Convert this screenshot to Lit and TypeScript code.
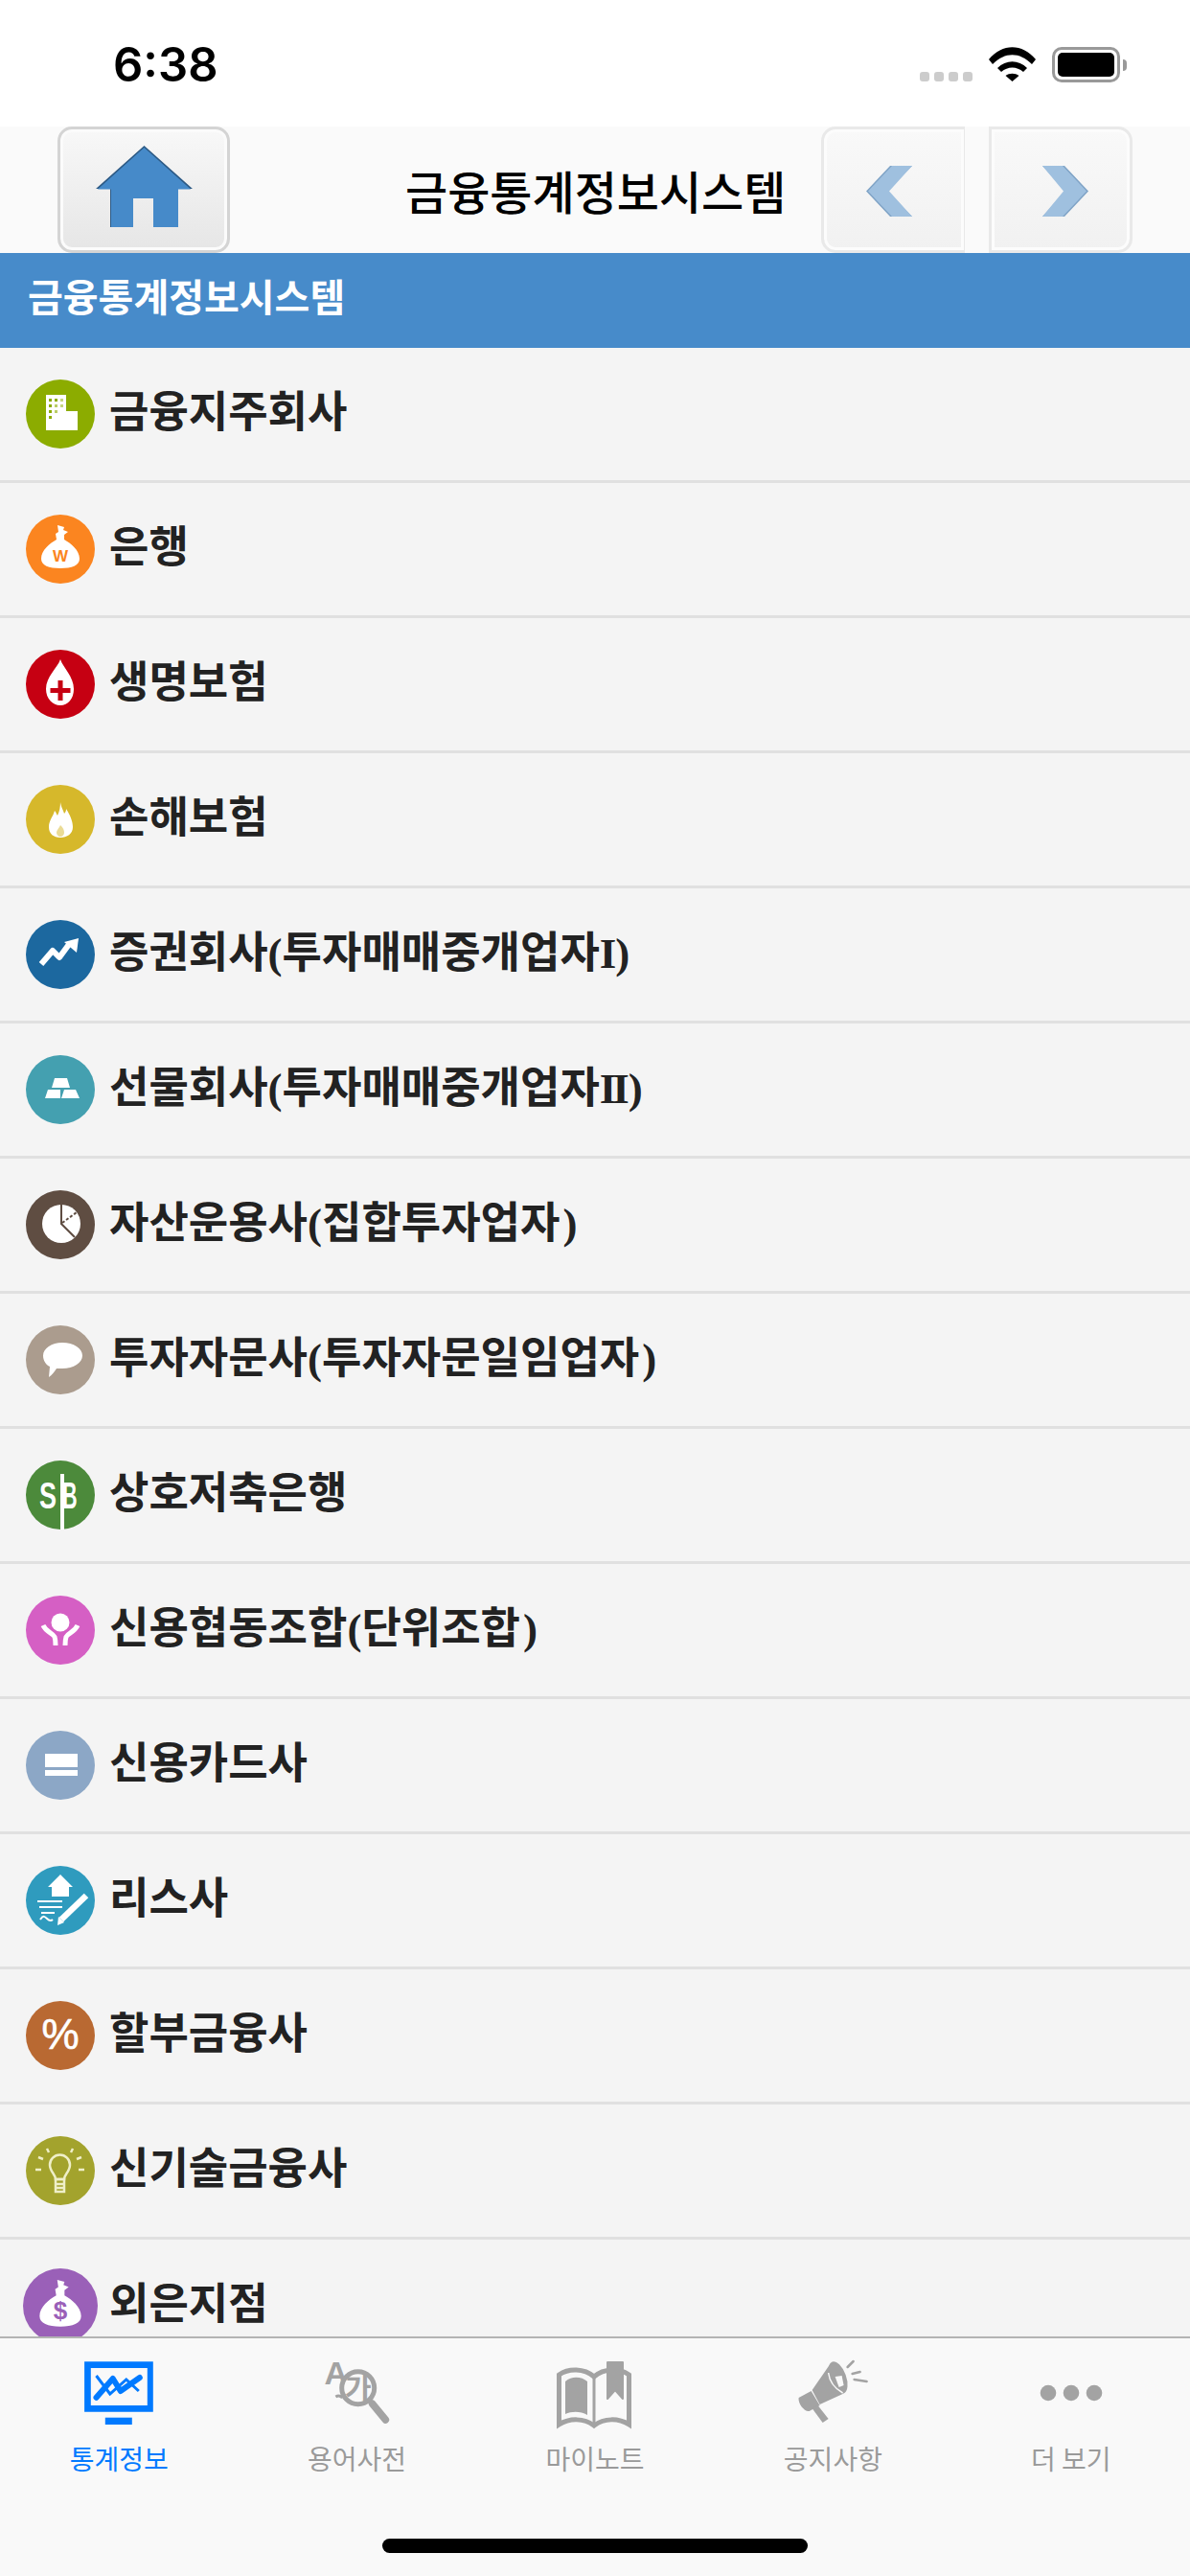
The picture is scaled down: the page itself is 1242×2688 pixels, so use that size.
import { LitElement, html, css, svg } from "lit";
import { customElement } from "lit/decorators.js";

const W = "#fff";
const bag = (c: string, t: string) => svg`
  <path fill="${W}" d="M33 11l7 2-1 3 5 2-4 3v5C47 30 56 37 56 46c0 7-8 10-20 10S16 53 16 46c0-9 9-16 16-20l-1-6 3-2z"/>
  <text x="36" y="49" text-anchor="middle" font-family="Liberation Sans" font-size="${t === "$" ? 24 : 17}" font-weight="700" fill="${c}">${t}</text>`;

interface Item { label: string; color: string; icon: ReturnType<typeof svg>; big?: boolean }

const items: Item[] = [
  { label: "금융지주회사", color: "#8cac00", icon: svg`
    <path fill="${W}" d="M21 16h21v17h12v20H21z"/>
    <g fill="#8cac00"><rect x="24" y="20" width="3" height="3"/><rect x="30" y="20" width="3" height="3"/><rect x="36" y="20" width="3" height="3" opacity=".5"/>
    <rect x="24" y="26" width="3" height="3"/><rect x="30" y="26" width="3" height="3" opacity=".6"/><rect x="36" y="26" width="3" height="3" opacity=".5"/>
    <rect x="24" y="32" width="3" height="3"/><rect x="30" y="32" width="3" height="3" opacity=".6"/><rect x="24" y="38" width="3" height="3"/></g>` },
  { label: "은행", color: "#fb8520", icon: bag("#fb8520", "W") },
  { label: "생명보험", color: "#c60012", icon: svg`
    <path fill="${W}" d="M36 10c3 9 14 18 14 31 0 10-6 17-14 17s-15-7-15-17c0-13 12-22 15-31z"/>
    <path fill="#c60012" d="M33.500 32h5v8h8v5h-8v8h-5v-8h-8v-5h8z"/>` },
  { label: "손해보험", color: "#d6b82b", icon: svg`
    <path fill="${W}" d="M36 18c1 6 3 8 4 12 2-2 2-4 2-5 4 6 7 13 7 19 0 7-6 11-13 11s-12-4-12-11c0-7 4-10 6-17 2 2 2 4 3 5 2-4 3-9 3-14z"/>
    <path fill="#d6b82b" d="M36 42c3 3 4 5 4 8 0 2-2 4-4 4s-4-2-4-4c0-3 3-5 4-8z" opacity=".5"/>` },
  { label: "증권회사(투자매매중개업자I)", color: "#1c689f", icon: svg`
    <path fill="none" stroke="${W}" stroke-width="6" stroke-linejoin="round" d="M16 46l12-14 7 7 11-15"/>
    <path fill="${W}" d="M40 23l15-4-2 15z"/>` },
  { label: "선물회사(투자매매중개업자II)", color: "#44a0b0", icon: svg`
    <path fill="${W}" d="M30 24h13l3 10H27zM23 36h13v9H20zM40 36h12l4 9H37z"/>` },
  { label: "자산운용사(집합투자업자)", color: "#5f4d42", icon: svg`
    <circle cx="37" cy="35" r="20" fill="${W}"/>
    <path fill="none" stroke="#5f4d42" stroke-width="2" d="M37 14v21l14 14"/>
    <path fill="none" stroke="#5f4d42" stroke-width="2" stroke-dasharray="3 2" d="M38 34l15-11"/>` },
  { label: "투자자문사(투자자문일임업자)", color: "#ab9c8e", icon: svg`
    <path fill="${W}" d="M38 18c12 0 21 6 21 13.500S50 45 38 45c-2 0-4 0-6 0-2 3-5 7-8 9l1-11c-4-2-7-6-7-11.500C18 24 27 18 38 18z"/>` },
  { label: "상호저축은행", color: "#4c8a3b", icon: svg`
    <rect x="36" y="14" width="4" height="58" fill="${W}"/>
    <text transform="translate(14 50) scale(.9 1.3)" font-family="Liberation Sans" font-weight="700" font-size="30" fill="${W}">S</text>
    <text transform="translate(38 50) scale(.72 1.3)" font-family="Liberation Sans" font-weight="700" font-size="30" fill="${W}">B</text>` },
  { label: "신용협동조합(단위조합)", color: "#d55fc4", icon: svg`
    <circle cx="36" cy="28" r="9.500" fill="${W}"/>
    <path fill="none" stroke="${W}" stroke-width="5" d="M18 31c3 7 10 8 12 12 1 3 1 6 1 9M54 31c-3 7-10 8-12 12-1 3-1 6-1 9"/>` },
  { label: "신용카드사", color: "#8ca7c6", icon: svg`
    <path fill="${W}" d="M20 24h34v14H20zM20 41h34v6H20z"/>` },
  { label: "리스사", color: "#2f9bbe", icon: svg`
    <path fill="${W}" d="M36 9l13 13h-4v10H27V22h-4z"/>
    <path fill="none" stroke="${W}" stroke-width="6.500" d="M63 31L37 56"/>
    <path fill="${W}" d="M33 62l1-9 6 6z"/>
    <path fill="none" stroke="${W}" stroke-width="2" d="M12 37h26M14 43h24M16 49h14M15 56c3-5 5-3 7-1s4 3 6 1"/>` },
  { label: "할부금융사", color: "#b96932", icon: svg`
    <text x="36" y="50" text-anchor="middle" font-family="Liberation Sans" font-size="44" stroke="${W}" stroke-width=".6" fill="${W}">%</text>` },
  { label: "신기술금융사", color: "#a3a32d", icon: svg`
    <g fill="none" stroke="#efefc8" stroke-width="2.500">
    <path d="M31 45c0-5-6-8-6-15a10.500 10.500 0 0 1 21 0c0 7-6 10-6 15z"/>
    <path d="M31 45h9v13h-9zM31 50h9M31 54h9"/>
    <path d="M22 13l2 4M49 13l-2 4M13 22l5 2M58 22l-5 2M10 35h6M55 35h6"/></g>` },
  { label: "외은지점", color: "#9a60b8", big: true, icon: bag("#9a60b8", "$") },
];

const gray = "#a3a3a3";
const tabs = [
  { label: "통계정보", active: true, view: "-5.800 0 100 80", icon: svg`
    <path fill="#007aff" fill-rule="evenodd" d="M8.300 9.300H80V61.700H8.300zM15 16V55H74V16z"/>
    <rect x="30" y="67.700" width="28" height="7.300" fill="#007aff"/>
    <path fill="none" stroke="#007aff" stroke-width="3" d="M20.700 24L35 43 52 28 65 40"/>
    <path fill="none" stroke="#007aff" stroke-width="6" stroke-linecap="round" stroke-linejoin="round" d="M20.700 46.700L38 27 46 40 66 26"/>` },
  { label: "용어사전", view: "-7.400 0 100 80", icon: svg`
    <text x="8" y="33" font-family="Liberation Sans" font-size="34" font-weight="700" fill="${gray}">A</text>
    <path d="M20 46c3-2 5-1 7 1" fill="none" stroke="${gray}" stroke-width="3"/>
    <circle cx="43.300" cy="36.700" r="17" fill="#f9f9f9" stroke="${gray}" stroke-width="5"/>
    <path d="M58 53l14 17" stroke="${gray}" stroke-width="7.500" stroke-linecap="round"/>
    <text x="43.300" y="48" text-anchor="middle" font-family="Noto Sans CJK KR" font-size="30" font-weight="700" fill="${gray}">가</text>` },
  { label: "마이노트", view: "1 0 100 80", icon: svg`
    <path fill="none" stroke="${gray}" stroke-width="5" d="M13.500 75V23c10-7 26-7 36.500 2 10.500-9 26.500-9 36.500-2v52c-11-7-26-7-36.500 1-10.500-8-25.500-8-36.500-1z"/>
    <path fill="${gray}" d="M20 30c7-6 17-5 23 0v35c-7-4-16-4-23-1z"/>
    <path fill="${gray}" stroke="${gray}" stroke-width="2" stroke-linejoin="round" d="M64 10h16v38l-8-9-8 9z"/>
    <path stroke="${gray}" stroke-width="3" d="M50 25v50"/>` },
  { label: "공지사항", view: "-5.600 0 100 80", icon: svg`
    <path fill="${gray}" d="M41 13L23 39l8 15 24-11z"/>
    <ellipse cx="50" cy="26" rx="8.500" ry="17.500" transform="rotate(-20 50 26)" fill="${gray}"/>
    <path fill="none" stroke="#f9f9f9" stroke-width="1.500" d="M40 21c1 8 6 16 15 21"/>
    <path fill="#f9f9f9" d="M47 25l7-1 2 10-5 2z"/>
    <path fill="${gray}" d="M9 47l13-7 9 15-11 6c-5 1-12-8-11-14z"/>
    <path fill="${gray}" d="M23 58l6-3 11 14-6 4z"/>
    <path fill="none" stroke="${gray}" stroke-width="2.500" stroke-linecap="round" d="M60 15l6-6M65 22l8-2M67 28l13 2"/>` },
  { label: "더 보기", view: "0 0 100 80", icon: svg`
    <circle cx="26" cy="42" r="8.300" fill="${gray}"/><circle cx="50" cy="42" r="8.300" fill="${gray}"/><circle cx="74" cy="42" r="8.300" fill="${gray}"/>` },
];

const renderLabel = (label: string) =>
  label.split(/(I+|\))/).map((part) =>
    part === ")" ? html`<span class="close">)</span>`
    : /^I+$/.test(part) ? html`<span class="num">${part}</span>`
    : part);

@customElement("app-root")
export class AppRoot extends LitElement {
  static styles = css`
    :host { display: block; width: 1242px; height: 2688px; overflow: hidden; font-family: "Noto Sans CJK KR", "Noto Sans", sans-serif; }
    .page { display: flex; flex-direction: column; height: 2688px; background: #f4f4f4; }

    .status { height: 132px; flex: none; background: #fff; display: flex; align-items: flex-start; padding: 0 73px 0 118px; box-sizing: border-box; }
    .time { font-family: Inter, sans-serif; font-weight: 600; font-size: 49px; line-height: 48px; margin-top: 44px; color: #000; }
    .status-right { margin-left: auto; display: flex; align-items: flex-start; }
    .dots { display: flex; gap: 5px; margin-top: 75px; margin-right: 17px; }
    .dots i { width: 10px; height: 10px; border-radius: 3px; background: #ccc; display: block; }
    .wifi { display: block; margin-top: 49px; margin-right: 17px; }
    .batt { width: 71px; height: 37px; margin-top: 49px; box-sizing: border-box; border: 3px solid #999; border-radius: 10px; padding: 3px; position: relative; }
    .batt b { display: block; height: 100%; background: #000; border-radius: 5px; }
    .batt::after { content: ""; position: absolute; left: 71px; top: 10px; width: 4px; height: 12px; background: #999; border-radius: 0 4px 4px 0; }

    .nav { height: 132px; flex: none; background: #fafafa; display: flex; align-items: stretch; padding: 0 60px; box-sizing: border-box; }
    .btn { box-sizing: border-box; display: flex; align-items: center; justify-content: center; }
    .home { width: 180px; border-radius: 15px; border: 3px solid #d4d4d4; background: linear-gradient(#f8f8f8, #e6e6e6); box-shadow: inset 0 0 0 3px #fbfbfb; }
    .home svg { margin-bottom: 6px; }
    .title { margin-left: 183px; font-size: 48px; font-weight: 500; color: #000; line-height: 132px; white-space: nowrap; }
    .arrows { margin-left: auto; display: flex; gap: 25px; }
    .prev, .next { width: 150px; border: 3px solid #e9e9e9; background: linear-gradient(#f9f9f9, #f1f1f1); box-shadow: inset 0 0 0 3px #fcfcfc; }
    .prev { border-radius: 15px 0 0 15px; border-right-width: 1px; }
    .next { border-radius: 0 15px 15px 0; }
    .prev svg { margin: 3px 10px 0 0; }
    .next svg { margin: 3px 0 0 10px; }

    .head { height: 99px; flex: none; background: #478bca; color: #fff; font-size: 40px; font-weight: 700; line-height: 88px; padding-left: 29px; box-sizing: border-box; }

    .list { flex: 1; min-height: 0; overflow: hidden; }
    .row { height: 141px; box-sizing: border-box; border-bottom: 3px solid #e0e0e0; display: flex; align-items: center; padding-left: 27px; gap: 15px; }
    .ic { width: 72px; height: 72px; flex: none; display: block; }
    .ic.big { width: 78px; height: 78px; margin: -3px; }
    .lab { font-family: "Liberation Serif", "Noto Sans CJK KR", serif; font-size: 45px; font-weight: 700; color: #222; white-space: nowrap; line-height: 60px; margin-bottom: 2px; }
    .close { padding-left: 3px; }
    .num { letter-spacing: -4px; }

    .tabs { height: 250px; flex: none; background: #f9f9f9; border-top: 2px solid #b3b3b3; box-sizing: border-box; position: relative; display: grid; grid-template-columns: repeat(5, 1fr); align-items: start; padding-top: 15px; }
    .tab { display: flex; flex-direction: column; align-items: center; color: #9a9a9a; font-size: 28px; line-height: 36px; }
    .tab.on { color: #007aff; }
    .tab svg { width: 100px; height: 80px; display: block; margin-bottom: 12px; }
    .indicator { position: absolute; left: 399px; bottom: 24px; width: 444px; height: 15px; border-radius: 8px; background: #000; }
  `;

  render() {
    return html`<div class="page">
      <div class="status">
        <div class="time">6:38</div>
        <div class="status-right">
          <div class="dots"><i></i><i></i><i></i><i></i></div>
          <svg class="wifi" width="49" height="36" viewBox="0 0 49 36">
            <path d="M0 13C14-4 35-4 49 13l-4 5C32 5 17 5 4 18z"/>
            <path d="M9 22c9-9 22-9 31 0l-4 4c-7-6-16-6-23 0z"/>
            <path d="M17.500 30c4-3 10-3 14 0l-7 6z"/>
          </svg>
          <div class="batt"><b></b></div>
        </div>
      </div>
      <div class="nav">
        <div class="btn home">
          <svg width="101" height="86" viewBox="0 0 101 86">
            <path fill="#2d5a85" d="M50.500 0L101 45H86v40H60V55H39v30H15V45H0z"/>
            <path fill="#468ac9" d="M50.500 2L99 45.500H86V85H60V55H39v30H16V45.500H2z"/>
          </svg>
        </div>
        <div class="title">금융통계정보시스템</div>
        <div class="arrows">
          <div class="btn prev"><svg width="48" height="53" viewBox="0 0 48 53"><path fill="#7fa3c6" d="M25 0h23L22 26.500 48 53H25L0 26.500z"/><path fill="#9fc0df" d="M27 0h21L24 26.500 48 53H27L2 26.500z"/></svg></div>
          <div class="btn next"><svg width="48" height="53" viewBox="0 0 48 53"><path fill="#7fa3c6" d="M0 0h23l25 26.500L23 53H0l24-26.500z"/><path fill="#9fc0df" d="M0 0h21l25 26.500L21 53H0l22-26.500z"/></svg></div>
        </div>
      </div>
      <div class="head">금융통계정보시스템</div>
      <div class="list">
        ${items.map((it) => html`<div class="row">
          <svg class="ic ${it.big ? "big" : ""}" viewBox="0 0 72 72"><circle cx="36" cy="36" r="36" fill="${it.color}"/>${it.icon}</svg>
          <div class="lab">${renderLabel(it.label)}</div>
        </div>`)}
      </div>
      <div class="tabs">
        ${tabs.map((t) => html`<div class="tab ${t.active ? "on" : ""}">
          <svg viewBox="${t.view}">${t.icon}</svg>
          <div>${t.label}</div>
        </div>`)}
        <div class="indicator"></div>
      </div>
    </div>`;
  }
}
